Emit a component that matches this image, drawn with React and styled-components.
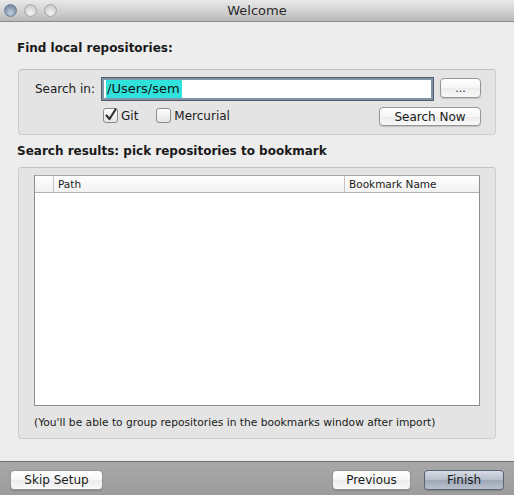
import styled, { createGlobalStyle } from "styled-components";

const Global = createGlobalStyle`
  html, body {
    margin: 0;
    padding: 0;
    background: #ededed;
  }
  body {
    font-family: "DejaVu Sans", "Liberation Sans", sans-serif;
    color: #1a1a1a;
  }
`;

const Window = styled.div`
  width: 514px;
  height: 495px;
  display: flex;
  flex-direction: column;
  background: #ededed;
  overflow: hidden;
`;

const TitleBar = styled.div`
  height: 21px;
  display: grid;
  grid-template-columns: 1fr auto 1fr;
  align-items: center;
  background: linear-gradient(#e9e9e9, #d3d3d3 50%, #b9b9b9);
  border-bottom: 1px solid #8c8c8c;
  flex-shrink: 0;
`;

const Lights = styled.div`
  display: flex;
  gap: 7px;
  padding-left: 4px;
`;

const Light = styled.span`
  width: 13px;
  height: 13px;
  border-radius: 50%;
  box-sizing: border-box;
  border: 1px solid ${(p) => (p.$active ? "#6f8297" : "#a9a9a9")};
  background: ${(p) =>
    p.$active
      ? "radial-gradient(circle at 50% 70%, #c4d2e0, #8296ac 60%, #6c7f95)"
      : "radial-gradient(circle at 50% 70%, #f4f4f4, #d4d4d4 60%, #c0c0c0)"};
`;

const Title = styled.div`
  font-size: 13px;
  color: #2a2a2a;
`;

const Body = styled.div`
  flex: 1;
  padding: 19px 18px 0 17px;
  display: flex;
  flex-direction: column;
`;

const Heading = styled.div`
  font-size: 12px;
  font-weight: bold;
  line-height: 15px;
  margin-bottom: ${(p) => p.$gap}px;
`;

const Group = styled.div`
  margin-left: 1px;
  background: #e4e4e4;
  border: 1px solid #cdcdcd;
  border-top-color: #c2c2c2;
  border-radius: 4px;
  box-sizing: border-box;
  height: ${(p) => p.$h}px;
  margin-bottom: ${(p) => p.$mb}px;
`;

const SearchGrid = styled.div`
  display: grid;
  grid-template-columns: 70px 333px 41px;
  column-gap: 6px;
  row-gap: 4px;
  padding: 7px 0 0 6px;
  align-items: center;
`;

const Label = styled.label`
  font-size: 12px;
  text-align: right;
`;

const InputBox = styled.div`
  height: 24px;
  box-sizing: border-box;
  background: #fff;
  border: 1px solid #4f5d6c;
  box-shadow: inset 0 0 0 2px #8193a7;
  display: flex;
  align-items: center;
  padding-left: 4px;
`;

const Selected = styled.span`
  background: #2fe3dc;
  font-size: 13px;
  line-height: 18px;
  padding: 0 2px 0 1px;
  color: #111;
`;

const Button = styled.button`
  font-family: "DejaVu Sans", "Liberation Sans", sans-serif;
  font-size: 12px;
  height: ${(p) => p.$h || 20}px;
  width: ${(p) => p.$w}px;
  padding: 0;
  box-sizing: border-box;
  border: 1px solid ${(p) => (p.$default ? "#5b6272" : "#969696")};
  border-radius: 4px;
  color: #1a1a1a;
  background: ${(p) =>
    p.$default
      ? "linear-gradient(#d8dde6, #b6bdca 50%, #9ea7b6 51%, #b9c0cd)"
      : "linear-gradient(#ffffff, #f6f6f6 50%, #ececec 51%, #f8f8f8)"};
  box-shadow: 0 1px 1px rgba(0, 0, 0, 0.15);
  cursor: default;
`;

const Dots = styled(Button)`
  margin-top: 1px;
  align-self: start;
  font-size: 11px;
`;

const OptionsRow = styled.div`
  grid-column: 2 / 4;
  display: flex;
  align-items: center;
  padding-left: 2px;
`;

const Check = styled.label`
  display: flex;
  align-items: center;
  gap: 3px;
  font-size: 12px;
  margin-right: ${(p) => p.$mr || 0}px;
`;

const SearchButton = styled(Button)`
  margin-left: auto;
  margin-top: 2px;
`;

const Table = styled.div`
  margin: 7px 15px 0 15px;
  height: 231px;
  box-sizing: border-box;
  background: #fff;
  border: 1px solid #8e8e8e;
  border-top-color: #a5a5a5;
`;

const HeaderRow = styled.div`
  display: grid;
  grid-template-columns: 18px 291px 1fr;
  height: 16px;
  background: linear-gradient(#ffffff, #f1f1f1);
  border-bottom: 1px solid #b3b3b3;
`;

const HeaderCell = styled.div`
  font-size: 10.5px;
  line-height: 16px;
  padding-left: 4px;
  border-left: ${(p) => (p.$first ? "none" : "1px solid #c4c4c4")};
  color: #1a1a1a;
`;

const Note = styled.div`
  font-size: 10.7px;
  padding: 10px 0 0 15px;
  color: #1a1a1a;
`;

const BottomBar = styled.div`
  height: 34px;
  flex-shrink: 0;
  border-top: 1px solid #6e6e6e;
  background: linear-gradient(#a8a8a8, #9c9c9c);
  display: flex;
  align-items: flex-start;
  padding: 8px 10px 0 10px;
  box-sizing: border-box;
  gap: 13px;
`;

const Spacer = styled.div`
  flex: 1;
`;

function CheckBox({ checked }) {
  return (
    <svg width="15" height="15" viewBox="0 0 15 15">
      <defs>
        <linearGradient id="cb" x1="0" y1="0" x2="0" y2="1">
          <stop offset="0" stopColor="#ffffff" />
          <stop offset="1" stopColor="#e4e4e4" />
        </linearGradient>
      </defs>
      <rect x="0.5" y="0.5" width="14" height="14" rx="2.5" fill="url(#cb)" stroke="#8a8a8a" />
      {checked && (
        <path d="M3.5 7.5 L6.5 11 L12.5 1.5" fill="none" stroke="#333" strokeWidth="2.2" strokeLinecap="round" strokeLinejoin="round" />
      )}
    </svg>
  );
}

export default function App() {
  return (
    <Window>
      <Global />
      <TitleBar>
        <Lights>
          <Light $active />
          <Light />
          <Light />
        </Lights>
        <Title>Welcome</Title>
        <div />
      </TitleBar>
      <Body>
        <Heading $gap={13}>Find local repositories:</Heading>
        <Group $h={66} $mb={9}>
          <SearchGrid>
            <Label>Search in:</Label>
            <InputBox>
              <Selected>/Users/sem</Selected>
            </InputBox>
            <Dots $w={41}>...</Dots>
            <OptionsRow>
              <Check $mr={18}>
                <CheckBox checked />
                Git
              </Check>
              <Check>
                <CheckBox />
                Mercurial
              </Check>
              <SearchButton $w={102} $h={19}>Search Now</SearchButton>
            </OptionsRow>
          </SearchGrid>
        </Group>
        <Heading $gap={8}>Search results: pick repositories to bookmark</Heading>
        <Group $h={272} $mb={0}>
          <Table>
            <HeaderRow>
              <HeaderCell $first />
              <HeaderCell>Path</HeaderCell>
              <HeaderCell>Bookmark Name</HeaderCell>
            </HeaderRow>
          </Table>
          <Note>(You'll be able to group repositories in the bookmarks window after import)</Note>
        </Group>
      </Body>
      <BottomBar>
        <Button $w={93}>Skip Setup</Button>
        <Spacer />
        <Button $w={79}>Previous</Button>
        <Button $w={80} $default>Finish</Button>
      </BottomBar>
    </Window>
  );
}
